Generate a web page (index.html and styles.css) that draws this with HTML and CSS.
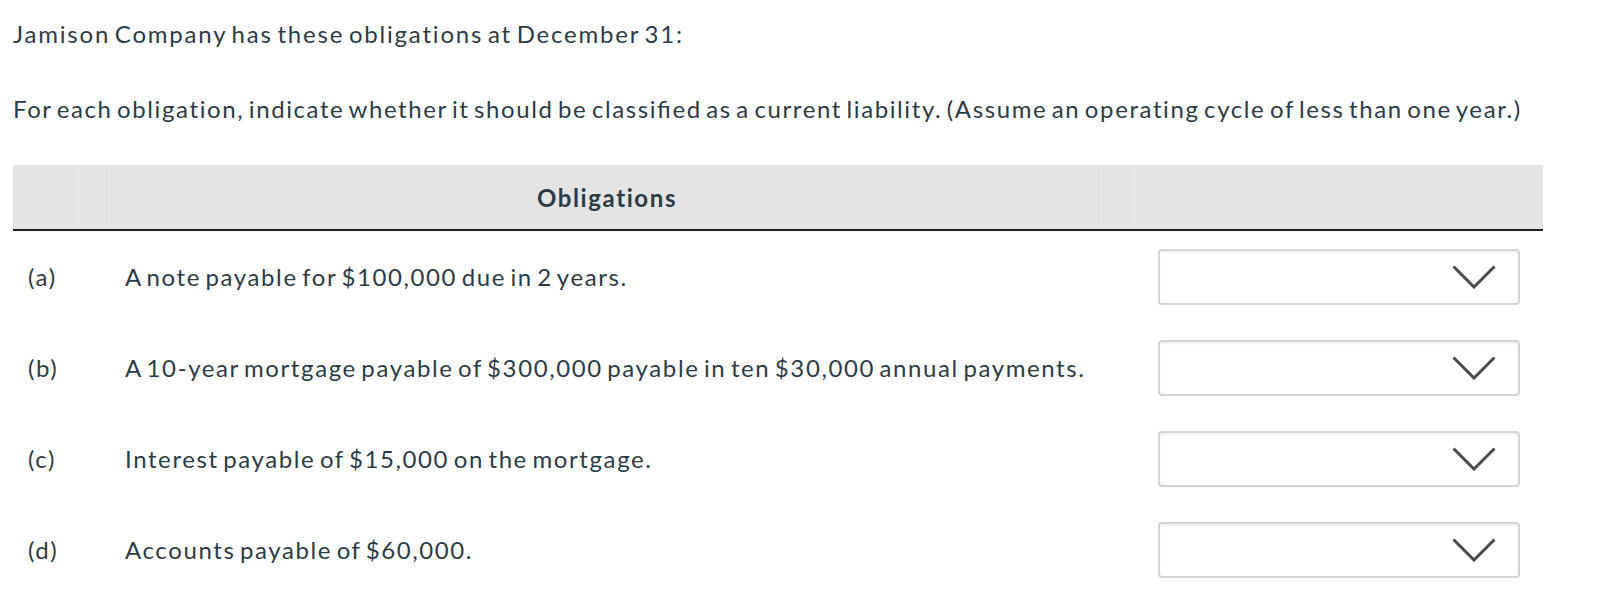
FILE: index.html
```html
<!DOCTYPE html>
<html lang="en">
<head>
<meta charset="utf-8">
<title>Jamison Company obligations</title>
<link rel="stylesheet" href="styles.css">
</head>
<body>
<div class="page">
  <p class="intro">Jamison Company has these obligations at December 31:</p>
  <p class="instr">For each obligation, indicate whether it should be classi<span class="lig">fi</span>ed as a current liability. (Assume an operating cycle of less than one year.)</p>
  <div class="table">
    <div class="head">
      <div class="hc h1"></div>
      <div class="hc h2"></div>
      <div class="hc h3"></div>
      <div class="hc h4"></div>
      <div class="hc h5"></div>
      <div class="title">Obligations</div>
    </div>
    <div class="row">
      <div class="lbl">(a)</div>
      <div class="txt">A note payable for $100,000 due in 2 years.</div>
      <div class="sel"><div class="box"><svg class="chev" viewBox="0 0 44 24"><polyline points="1.5,1.5 22,22 42.5,1.5"/></svg></div></div>
    </div>
    <div class="row">
      <div class="lbl">(b)</div>
      <div class="txt">A 10-year mortgage payable of $300,000 payable in ten $30,000 annual payments.</div>
      <div class="sel"><div class="box"><svg class="chev" viewBox="0 0 44 24"><polyline points="1.5,1.5 22,22 42.5,1.5"/></svg></div></div>
    </div>
    <div class="row">
      <div class="lbl">(c)</div>
      <div class="txt">Interest payable of $15,000 on the mortgage.</div>
      <div class="sel"><div class="box"><svg class="chev" viewBox="0 0 44 24"><polyline points="1.5,1.5 22,22 42.5,1.5"/></svg></div></div>
    </div>
    <div class="row">
      <div class="lbl">(d)</div>
      <div class="txt">Accounts payable of $60,000.</div>
      <div class="sel"><div class="box"><svg class="chev" viewBox="0 0 44 24"><polyline points="1.5,1.5 22,22 42.5,1.5"/></svg></div></div>
    </div>
  </div>
</div>
</body>
</html>
```
FILE: styles.css
```css
html, body {
  margin: 0;
  padding: 0;
  background: #fff;
}
.page {
  padding: 0 0 0 13px;
  width: 1530px;
  font-family: Lato, "Open Sans", sans-serif;
  color: #2d3b45;
  font-size: 24px;
  line-height: 29px;
  letter-spacing: 1.6px;
  word-spacing: -3.2px;
}
.intro {
  margin: 19px 0 0 0;
  white-space: nowrap;
  letter-spacing: 1.8px;
}
.instr {
  margin: 46px 0 0 0;
  white-space: nowrap;
}
.lig {
  letter-spacing: 0;
  padding-right: 1.6px;
}
.table {
  margin-top: 42px;
  width: 1530px;
}
.head {
  display: grid;
  grid-template-columns: 66px 31px 992px 33px 408px;
  grid-template-rows: 64px;
  background: #e4e4e4;
  border-bottom: 2px solid #1e1e1e;
}
.hc {
  grid-row: 1;
  border-right: 1px solid #ececec;
}
.h1 { grid-column: 1; }
.h2 { grid-column: 2; }
.h3 { grid-column: 3; }
.h4 { grid-column: 4; }
.h5 { grid-column: 5; border-right: none; }
.title {
  grid-row: 1;
  grid-column: 2 / 5;
  display: flex;
  align-items: center;
  justify-content: center;
  font-weight: 700;
  font-size: 24px;
  padding-top: 1px;
}
.row {
  display: grid;
  grid-template-columns: 97px 1025px 408px;
  height: 91px;
  align-items: center;
}
.lbl {
  padding-left: 15px;
}
.txt {
  padding-left: 15px;
  white-space: nowrap;
}
.sel {
  padding: 0 23px;
}
.box {
  height: 56px;
  box-sizing: border-box;
  border: 2px solid #d3d3d3;
  border-radius: 4px;
  box-shadow: inset 0 2px 2px rgba(0,0,0,0.06);
  display: flex;
  align-items: center;
  justify-content: flex-end;
  padding-right: 22px;
}
.chev {
  width: 44px;
  height: 24px;
  fill: none;
  stroke: #4a4a4a;
  stroke-width: 3;
}
```
